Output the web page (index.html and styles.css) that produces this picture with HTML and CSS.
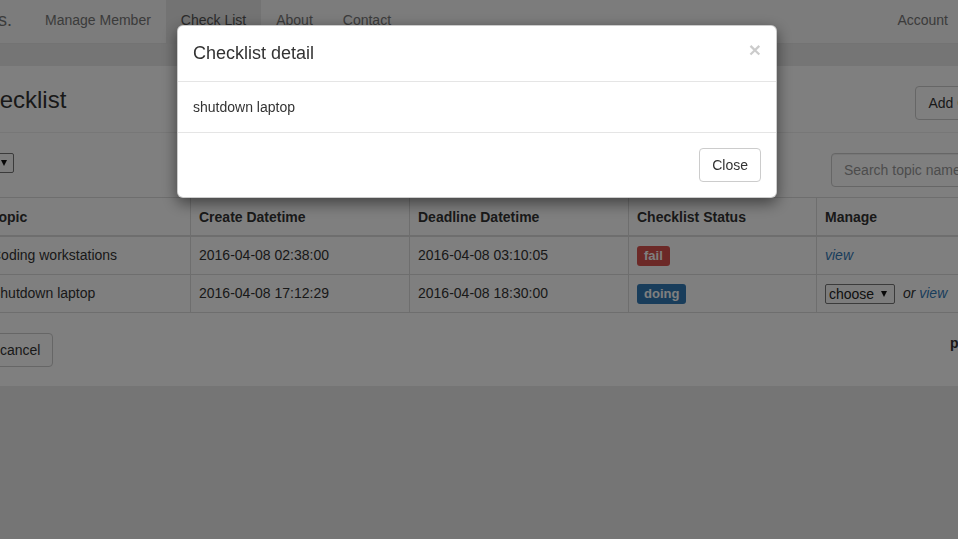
FILE: index.html
```html
<!DOCTYPE html>
<html lang="en">
<head>
<meta charset="utf-8">
<title>Checklist</title>
<link rel="stylesheet" href="styles.css">
</head>
<body>
<div class="page">
  <nav class="navbar">
    <a class="brand" href="#"><span>Checklists.</span></a>
    <ul class="nav">
      <li><a href="#">Manage Member</a></li>
      <li class="active"><a href="#">Check List</a></li>
      <li><a href="#">About</a></li>
      <li><a href="#">Contact</a></li>
    </ul>
    <ul class="nav nav-right">
      <li><a href="#">Account</a></li>
    </ul>
  </nav>

  <main class="panel">
    <div class="head-row">
      <h3 class="title">Checklist</h3>
      <button class="btn btn-top" type="button">Add Checklist</button>
    </div>
    <hr class="rule">
    <div class="toolbar">
      <span class="fake-select small-select"><span class="sel-text">10</span><span class="caret"></span></span>
      <input class="search" type="text" placeholder="Search topic name">
    </div>
    <table class="table">
      <colgroup>
        <col class="c1"><col class="c2"><col class="c3"><col class="c4"><col class="c5">
      </colgroup>
      <thead>
        <tr><th>Topic</th><th>Create Datetime</th><th>Deadline Datetime</th><th>Checklist Status</th><th>Manage</th></tr>
      </thead>
      <tbody>
        <tr>
          <td>Coding workstations</td>
          <td>2016-04-08 02:38:00</td>
          <td>2016-04-08 03:10:05</td>
          <td><span class="label label-fail">fail</span></td>
          <td><a class="link" href="#">view</a></td>
        </tr>
        <tr>
          <td>Shutdown laptop</td>
          <td>2016-04-08 17:12:29</td>
          <td>2016-04-08 18:30:00</td>
          <td><span class="label label-doing">doing</span></td>
          <td><span class="fake-select choose"><span class="sel-text">choose</span><span class="caret"></span></span> <em class="or">or</em> <a class="link" href="#">view</a></td>
        </tr>
      </tbody>
    </table>
    <div class="foot-row">
      <button class="btn btn-cancel" type="button">cancel</button>
      <span class="pager">page 1</span>
    </div>
  </main>
</div>

<div class="backdrop"></div>
<div class="modal">
  <div class="modal-content">
    <div class="modal-header">
      <h4 class="modal-title">Checklist detail</h4>
      <span class="close">&times;</span>
    </div>
    <div class="modal-body">shutdown laptop</div>
    <div class="modal-footer">
      <button class="btn" type="button">Close</button>
    </div>
  </div>
</div>
</body>
</html>
```

FILE: styles.css
```css
* { box-sizing: border-box; }
html, body {
  margin: 0;
  padding: 0;
  overflow: hidden;
  height: 100%;
}
body {
  background: #eaeaea;
  font-family: "Liberation Sans", Arial, Helvetica, sans-serif;
  font-size: 14px;
  line-height: 20px;
  color: #333;
}
a { text-decoration: none; }

.page {
  margin-left: -40px;
  width: 1100px;
}

/* navbar */
.navbar {
  width: 1003px;
  height: 44px;
  background: #f8f8f8;
  border-bottom: 1px solid #e7e7e7;
  display: flex;
  margin-bottom: 22px;
}
.brand {
  width: 70px;
  padding: 10px 18px 13px 15px;
  display: flex;
  justify-content: flex-end;
  overflow: hidden;
  white-space: nowrap;
  color: #777;
  font-size: 18px;
  line-height: 20px;
}
.nav {
  display: flex;
  list-style: none;
  margin: 0;
  padding: 0;
}
.nav-right { margin-left: auto; }
.nav li a {
  display: block;
  padding: 10px 15px 13px;
  height: 43px;
  color: #777;
  line-height: 20px;
}
.nav li.active a {
  background: #e7e7e7;
  color: #555;
}

/* main panel */
.panel {
  background: #fff;
  width: 1100px;
  padding: 18px 33px 19px 22px;
}
.head-row {
  display: flex;
  justify-content: space-between;
  align-items: flex-start;
}
.title {
  margin: 3px 0 0 -13px;
  font-size: 24px;
  font-weight: 500;
  line-height: 26.4px;
  color: #333;
}
.btn {
  display: inline-block;
  height: 34px;
  padding: 6px 12px;
  font-family: inherit;
  font-size: 14px;
  line-height: 20px;
  color: #333;
  background: #fff;
  border: 1px solid #ccc;
  border-radius: 4px;
  white-space: nowrap;
}
.btn-top { margin-top: 2px; }
.rule {
  border: 0;
  border-top: 1px solid #eee;
  margin: 12px 0 20px;
}
.toolbar {
  display: flex;
  justify-content: space-between;
  align-items: flex-start;
  margin-bottom: 10px;
}
.fake-select {
  display: inline-flex;
  align-items: center;
  justify-content: space-between;
  height: 20px;
  border: 1px solid #767676;
  border-radius: 2px;
  background: #fafafa;
  color: #222;
  vertical-align: middle;
}
.small-select {
  width: 45px;
  margin-left: -13px;
  padding: 0 6px 0 4px;
  font-size: 13px;
}
.choose {
  width: 70px;
  padding: 0 7px 0 3px;
  margin-right: 4px;
  font-size: 14px;
}
.caret {
  width: 0;
  height: 0;
  border-left: 3.5px solid transparent;
  border-right: 3.5px solid transparent;
  border-top: 6px solid #111;
}
.search {
  width: 196px;
  height: 34px;
  padding: 6px 12px;
  font-family: inherit;
  font-size: 14px;
  line-height: 20px;
  color: #555;
  border: 1px solid #ccc;
  border-radius: 4px;
  box-shadow: inset 0 1px 1px rgba(0,0,0,.075);
  background: #fff;
}
.search::placeholder { color: #999; }

/* table */
.table {
  width: 1045px;
  border-collapse: collapse;
  table-layout: fixed;
  margin-top: 3px;
  margin-bottom: 20px;
}
.c1 { width: 208px; }
.c2 { width: 219px; }
.c3 { width: 219px; }
.c4 { width: 188px; }
.c5 { width: 211px; }
.table th, .table td {
  border: 1px solid #ddd;
  padding: 8px;
  text-align: left;
  vertical-align: top;
  white-space: nowrap;
  overflow: hidden;
}
.table th {
  font-weight: bold;
  padding-top: 9px;
  padding-bottom: 8px;
  border-bottom-width: 2px;
}
.label {
  display: inline-block;
  padding: 3px 7px 4px;
  font-size: 13px;
  line-height: 13px;
  font-weight: bold;
  color: #fff;
  border-radius: 3px;
}
.label-fail { background: #d9534f; }
.label-doing { background: #337ab7; }
.link {
  color: #337ab7;
  font-style: italic;
}
.or { font-style: italic; }

.foot-row {
  display: flex;
  align-items: flex-start;
}
.btn-cancel { margin-left: 5px; }
.pager {
  margin-left: auto;
  width: 77px;
  font-weight: bold;
  white-space: nowrap;
}

/* modal */
.backdrop {
  position: fixed;
  inset: 0;
  background: rgba(0,0,0,.5);
}
.modal {
  position: fixed;
  inset: 0;
}
.modal-content {
  width: 600px;
  margin: 25px 0 0 177px;
  background: #fff;
  border: 1px solid rgba(0,0,0,.2);
  border-radius: 6px;
  box-shadow: 0 5px 15px rgba(0,0,0,.5);
}
.modal-header {
  display: flex;
  justify-content: space-between;
  align-items: flex-start;
  padding: 15px;
  border-bottom: 1px solid #e5e5e5;
}
.modal-title {
  margin: 0;
  font-size: 18px;
  font-weight: 500;
  line-height: 25px;
  color: #333;
}
.close {
  margin-top: -2px;
  font-size: 21px;
  font-weight: bold;
  line-height: 21px;
  color: #000;
  opacity: .2;
}
.modal-body {
  padding: 15px;
}
.modal-footer {
  display: flex;
  justify-content: flex-end;
  padding: 15px;
  border-top: 1px solid #e5e5e5;
}
```
